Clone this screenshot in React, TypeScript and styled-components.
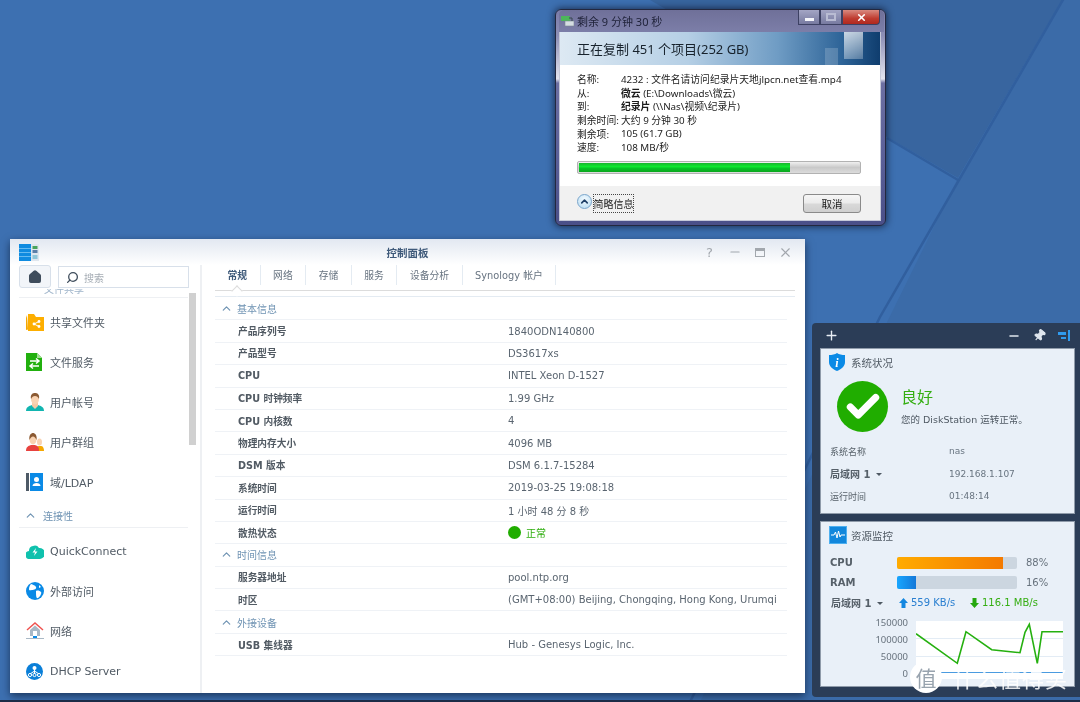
import React from 'react';
import styled, { createGlobalStyle } from 'styled-components';
import { ChevronUp, House, Search, Pin, Plus, Minus, X, Check } from 'lucide-react';

const GlobalStyle = createGlobalStyle`
  html, body {
    margin: 0;
    padding: 0;
    height: 100%;
    overflow: hidden;
  }
  * {
    box-sizing: border-box;
  }
  #root {
    font-family: "DejaVu Sans", "Noto Sans CJK SC", sans-serif;
  }
`;

const copyRows = [
  { label: '名称:', value: '4232 : 文件名请访问纪录片天地jlpcn.net查看.mp4' },
  { label: '从:', strong: '微云', value: ' (E:\\Downloads\\微云)' },
  { label: '到:', strong: '纪录片', value: ' (\\\\Nas\\视频\\纪录片)' },
  { label: '剩余时间:', value: '大约 9 分钟 30 秒' },
  { label: '剩余项:', value: '105 (61.7 GB)' },
  { label: '速度:', value: '108 MB/秒' },
];

const sections = [
  {
    title: '基本信息',
    rows: [
      ['产品序列号', '1840ODN140800'],
      ['产品型号', 'DS3617xs'],
      ['CPU', 'INTEL Xeon D-1527'],
      ['CPU 时钟频率', '1.99 GHz'],
      ['CPU 内核数', '4'],
      ['物理内存大小', '4096 MB'],
      ['DSM 版本', 'DSM 6.1.7-15284'],
      ['系统时间', '2019-03-25 19:08:18'],
      ['运行时间', '1 小时 48 分 8 秒'],
      ['散热状态', ''],
    ],
  },
  {
    title: '时间信息',
    rows: [
      ['服务器地址', 'pool.ntp.org'],
      ['时区', '(GMT+08:00) Beijing, Chongqing, Hong Kong, Urumqi'],
    ],
  },
  {
    title: '外接设备',
    rows: [['USB 集线器', 'Hub - Genesys Logic, Inc.']],
  },
];

const tabs = ['常规', '网络', '存储', '服务', '设备分析', 'Synology 帐户'];

const chartPoints =
  '0,12.7 41.3,42.3 50,10.7 75.7,28.7 104,31.7 109,11.3 113.3,3.3 121.3,42.3 126,10.7 147,10.7';

// wallpaper facets, in page pixels
const WallpaperArt = () => (
  <WallpaperSvg width="1080" height="702" viewBox="0 0 1080 702">
    <rect width="1080" height="702" fill="#3d70b1" />
    <path d="M650 0H1062L958 178Z" fill="#38659f" />
    <path d="M1062 0H1080V702H700L958 178Z" fill="#3b6ba8" />
    <path d="M1064 -2 880 317 690 702" stroke="#315f9e" strokeWidth="2.5" fill="none" />
    <path d="M887 138 958 180" stroke="#315f9e" strokeWidth="2.5" fill="none" />
  </WallpaperSvg>
);

const LogoIcon = () => (
  <svg width="20" height="17" viewBox="0 0 20 17">
    <rect width="12" height="17" fill="#0f8be0" />
    <path d="M0 4.500h12M0 8.500h12M0 12.500h12" stroke="#7cc8f5" strokeWidth="0.8" />
    <rect x="12" width="8" height="17" fill="#dfe6ee" />
    <rect x="13.500" y="2" width="5" height="3" fill="#49a35c" />
    <rect x="13.500" y="6" width="5" height="3" fill="#5b7fa8" />
    <rect x="13.500" y="11" width="5" height="4" fill="#8fc5d8" />
  </svg>
);

const FolderIcon = () => (
  <svg width="18" height="17" viewBox="0 0 18 17">
    <path d="M0 4 1 1 2 15.500 0 16Z" fill="#f5a800" />
    <path d="M2 0h6l2 3h8v14H2Z" fill="#fdae00" />
    <circle cx="8" cy="10" r="1.400" fill="#fff" />
    <circle cx="13" cy="7.500" r="1.400" fill="#fff" />
    <circle cx="13" cy="12.500" r="1.400" fill="#fff" />
    <path d="M8 10 13 7.500M8 10l5 2.500" stroke="#fff" />
  </svg>
);

const FileServiceIcon = () => (
  <svg width="17" height="18" viewBox="0 0 17 18">
    <path d="M0 0h11l5 5v13H0Z" fill="#21b00e" />
    <path d="M11 0l5 5h-5Z" fill="#9ee08f" />
    <path d="M4 8h9M10 5.500 13 8l-3 2.500M13 13H4M7 10.500 4 13l3 2.500" stroke="#fff" strokeWidth="1.500" fill="none" />
  </svg>
);

const UserIcon = () => (
  <svg width="18" height="18" viewBox="0 0 18 18">
    <path d="M0 18c0-4 3-5 6-6h6c3 1 6 2 6 6Z" fill="#12b5b0" />
    <path d="M6 10h6v3l-3 3-3-3Z" fill="#f7c9a4" />
    <ellipse cx="9" cy="6" rx="4" ry="5.500" fill="#f9d3b2" />
    <path d="M5 6C4 1 7 0 9 0s5 1 4 6c-1-2-2-3-4-3S6 4 5 6Z" fill="#8b5a33" />
  </svg>
);

const GroupIcon = () => (
  <svg width="18" height="18" viewBox="0 0 18 18">
    <path d="M10 18c0-3 1-5 3-5h2c2 0 3 2 3 5Z" fill="#f5a800" />
    <ellipse cx="13.500" cy="9" rx="2.500" ry="3.500" fill="#f9d3b2" />
    <path d="M0 18c0-4 2-5 5-6h4c3 1 4 2 4 6Z" fill="#e8423f" />
    <ellipse cx="7" cy="6.500" rx="3.500" ry="5" fill="#f9d3b2" />
    <path d="M3.500 7C2.500 1 6 0 7 0s4.500 1 3.500 7C9.500 5 8.500 3.500 7 3.500S4.500 5 3.500 7Z" fill="#8b5a33" />
  </svg>
);

const LdapIcon = () => (
  <svg width="17" height="18" viewBox="0 0 17 18">
    <rect width="3" height="18" fill="#4e5a66" />
    <rect x="4" width="13" height="18" fill="#0a8ae6" />
    <circle cx="10.500" cy="6.500" r="2.500" fill="#fff" />
    <path d="M6.500 13c0-2 2-3 4-3s4 1 4 3Z" fill="#fff" />
  </svg>
);

const QuickConnectIcon = () => (
  <svg width="18" height="15" viewBox="0 0 18 15">
    <path d="M4 15a4 4 0 0 1-1-8 5 5 0 0 1 4-5 5 5 0 0 1 6 2 5.500 5.500 0 0 1 1 11Z" fill="#0fc1ad" />
    <path d="M10 4 6.500 8.500h2.500L8 12l3.500-4.500H9Z" fill="#fff" />
  </svg>
);

const GlobeIcon = () => (
  <svg width="18" height="18" viewBox="0 0 18 18">
    <circle cx="9" cy="9" r="9" fill="#0a8ae6" />
    <path d="M5 2c2 1 4 1 5 3S8 8 6 8 3 9 3 7 4 3 5 2ZM10 9c2-1 4 0 5 1s-1 5-3 6-2-3-2-7ZM13 3l2 2-2 1Z" fill="#fff" />
  </svg>
);

const NetworkIcon = () => (
  <svg width="18" height="18" viewBox="0 0 18 18">
    <path d="M1 8 9 1l8 7" stroke="#ef5350" strokeWidth="1.500" fill="none" />
    <path d="M4 8l5-4.500L14 8v6H4Z" fill="#a9b8c5" />
    <rect x="7" y="9" width="4" height="5" fill="#fff" />
    <rect x="7" y="14" width="4" height="3" fill="#0a8ae6" />
    <path d="M0 16.500h18" stroke="#a9b8c5" />
  </svg>
);

const DhcpIcon = () => (
  <svg width="17" height="17" viewBox="0 0 17 17">
    <circle cx="8.500" cy="8.500" r="8.500" fill="#0a7fd8" />
    <circle cx="8.500" cy="5" r="2" fill="#fff" />
    <path d="M8.500 6v5M8.500 8 4 11M8.500 8l4.500 3" stroke="#fff" />
    <circle cx="4" cy="12" r="1.600" fill="none" stroke="#fff" />
    <circle cx="8.500" cy="12" r="1.600" fill="none" stroke="#fff" />
    <circle cx="13" cy="12" r="1.600" fill="none" stroke="#fff" />
  </svg>
);

const CopyIcon = () => (
  <svg width="13" height="12" viewBox="0 0 13 12">
    <rect y="1" width="9" height="5" fill="#4cb65a" />
    <rect x="4" y="6" width="9" height="5" fill="#d5dde2" stroke="#7b8790" strokeWidth="0.600" />
    <path d="M8 3h3v3" stroke="#37474f" fill="none" />
  </svg>
);

const ShieldIcon = () => (
  <svg width="16" height="18" viewBox="0 0 16 18">
    <path d="M8 0c2 1.500 5 2 8 2v7c0 4-3 7-8 9-5-2-8-5-8-9V2c3 0 6-.5 8-2Z" fill="#0a8ae6" />
    <text x="8" y="13.500" textAnchor="middle" fontSize="12" fontWeight="700" fontStyle="italic" fontFamily="Liberation Serif, serif" fill="#fff">i</text>
  </svg>
);

const MonitorIcon = () => (
  <svg width="18" height="18" viewBox="0 0 18 18">
    <rect x="0.500" y="0.500" width="17" height="17" fill="#1287dc" stroke="#4eb0f0" />
    <path d="M2 9h3l1.500-3L8 12l1.500-7L11 11l1-2h4" stroke="#fff" strokeWidth="1" fill="none" />
  </svg>
);

const ArrowGlyph = ({ color, down }: { color: string; down?: boolean }) => (
  <svg width="9" height="10" viewBox="0 0 9 10" style={{ transform: down ? 'rotate(180deg)' : undefined }}>
    <path d="M4.500 0 9 5H6.500v5h-4V5H0Z" fill={color} />
  </svg>
);

export default function App() {
  return (
    <Desktop>
      <GlobalStyle />
      <WallpaperArt />

      <CopyDialog>
        <DialogTitleBar>
          <CopyIcon />
          <DialogCaption>剩余 9 分钟 30 秒</DialogCaption>
          <CaptionButtons>
            <CaptionButton><MinGlyph /></CaptionButton>
            <CaptionButton><MaxGlyph /></CaptionButton>
            <CloseButton>
              <X size={11} strokeWidth={3.5} color="#fff" />
            </CloseButton>
          </CaptionButtons>
        </DialogTitleBar>
        <DialogClient>
          <DialogBanner>
            <BannerTitle>正在复制 451 个项目(252 GB)</BannerTitle>
            <BannerGlassBig />
            <BannerGlassSmall />
          </DialogBanner>
          <DialogBody>
            <CopyGrid>
              {copyRows.map((row) => (
                <React.Fragment key={row.label}>
                  <span>{row.label}</span>
                  <span>
                    {row.strong && <strong>{row.strong}</strong>}
                    {row.value}
                  </span>
                </React.Fragment>
              ))}
            </CopyGrid>
            <ProgressTrack>
              <ProgressFill style={{ width: '75.4%' }} />
            </ProgressTrack>
          </DialogBody>
          <DialogFooter>
            <DetailsToggle>
              <ToggleCircle>
                <ChevronUp size={11} strokeWidth={3.5} color="#1f3f66" />
              </ToggleCircle>
              <ToggleLabel>简略信息</ToggleLabel>
            </DetailsToggle>
            <CancelButton>取消</CancelButton>
          </DialogFooter>
        </DialogClient>
      </CopyDialog>

      <ControlPanel>
        <PanelTitleBar>
          <LogoIcon />
          <PanelTitle>控制面板</PanelTitle>
          <PanelControls>
            <PanelHelp>?</PanelHelp>
            <Minus size={14} strokeWidth={2} />
            <PanelMaxGlyph />
            <X size={15} strokeWidth={1.8} />
          </PanelControls>
        </PanelTitleBar>
        <PanelBody>
          <Sidebar>
            <SidebarTools>
              <HomeButton>
                <House size={14} strokeWidth={2.6} color="#3f4d5c" fill="#3f4d5c" />
              </HomeButton>
              <SearchBox>
                <Search size={13} strokeWidth={2.4} color="#3f4d5c" style={{ transform: 'scaleX(-1)' }} />
                <span>搜索</span>
              </SearchBox>
            </SidebarTools>
            <ClippedGroup>
              <SideHeading>文件共享</SideHeading>
            </ClippedGroup>
            <NavItem><NavIcon><FolderIcon /></NavIcon>共享文件夹</NavItem>
            <NavItem><NavIcon><FileServiceIcon /></NavIcon>文件服务</NavItem>
            <NavItem><NavIcon><UserIcon /></NavIcon>用户帐号</NavItem>
            <NavItem><NavIcon><GroupIcon /></NavIcon>用户群组</NavItem>
            <NavItem><NavIcon><LdapIcon /></NavIcon>域/LDAP</NavItem>
            <NavGroup>
              <ChevronUp size={13} strokeWidth={2.2} />
              连接性
            </NavGroup>
            <NavItem><NavIcon><QuickConnectIcon /></NavIcon>QuickConnect</NavItem>
            <NavItem><NavIcon><GlobeIcon /></NavIcon>外部访问</NavItem>
            <NavItem><NavIcon><NetworkIcon /></NavIcon>网络</NavItem>
            <NavItem><NavIcon><DhcpIcon /></NavIcon>DHCP Server</NavItem>
            <SideScrollbar />
          </Sidebar>
          <Content>
            <TabBar>
              {tabs.map((tab, i) => (
                <Tab key={tab} $active={i === 0}>{tab}</Tab>
              ))}
            </TabBar>
            <InfoTable>
              {sections.map((section) => (
                <React.Fragment key={section.title}>
                  <SectionRow>
                    <ChevronUp size={13} strokeWidth={2.2} />
                    {section.title}
                  </SectionRow>
                  {section.rows.map(([label, value]) => (
                    <InfoRow key={label}>
                      <InfoLabel>{label}</InfoLabel>
                      {value ? (
                        <InfoValue>{value}</InfoValue>
                      ) : (
                        <StatusValue>
                          <StatusDot />
                          正常
                        </StatusValue>
                      )}
                    </InfoRow>
                  ))}
                </React.Fragment>
              ))}
            </InfoTable>
          </Content>
        </PanelBody>
      </ControlPanel>

      <WidgetPanel>
        <WidgetToolbar>
          <Plus size={15} strokeWidth={2.2} color="#e8eef5" />
          <WidgetTools>
            <Minus size={14} strokeWidth={2.2} color="#dfe6ee" />
            <Pin size={13} strokeWidth={2.2} color="#dfe6ee" fill="#dfe6ee" style={{ transform: 'rotate(40deg)' }} />
            <DockGlyph />
          </WidgetTools>
        </WidgetToolbar>

        <HealthCard>
          <CardTitle>
            <TitleIcon><ShieldIcon /></TitleIcon>
            系统状况
          </CardTitle>
          <HealthSummary>
            <HealthBadge>
              <Check size={38} strokeWidth={4.5} color="#fff" />
            </HealthBadge>
            <div>
              <HealthWord>良好</HealthWord>
              <HealthNote>您的 DiskStation 运转正常。</HealthNote>
            </div>
          </HealthSummary>
          <SystemGrid>
            <SystemKey>系统名称</SystemKey>
            <SystemValue>nas</SystemValue>
            <SystemKey $strong>局域网 1 <Caret /></SystemKey>
            <SystemValue>192.168.1.107</SystemValue>
            <SystemKey>运行时间</SystemKey>
            <SystemValue>01:48:14</SystemValue>
          </SystemGrid>
        </HealthCard>

        <MonitorCard>
          <CardTitle>
            <TitleIcon><MonitorIcon /></TitleIcon>
            资源监控
          </CardTitle>
          <MeterList>
            <MeterRow>
              <MeterName>CPU</MeterName>
              <MeterTrack>
                <MeterFill $kind="cpu" style={{ width: '88%' }} />
              </MeterTrack>
              <MeterValue>88%</MeterValue>
            </MeterRow>
            <MeterRow>
              <MeterName>RAM</MeterName>
              <MeterTrack>
                <MeterFill $kind="ram" style={{ width: '16%' }} />
              </MeterTrack>
              <MeterValue>16%</MeterValue>
            </MeterRow>
          </MeterList>
          <NetRow>
            <NetName>局域网 1 <Caret /></NetName>
            <NetUp>
              <ArrowGlyph color="#1487e0" />
              559 KB/s
            </NetUp>
            <NetDown>
              <ArrowGlyph color="#25a80f" down />
              116.1 MB/s
            </NetDown>
          </NetRow>
          <ChartRow>
            <ChartAxis>
              <span>150000</span>
              <span>100000</span>
              <span>50000</span>
              <span>0</span>
            </ChartAxis>
            <ChartPlot>
              <svg width="147" height="58" viewBox="0 0 147 58">
                <path d="M0 17.500h147M0 35.500h147" stroke="#e3ecf5" />
                <path d="M0 51.500h147" stroke="#4a9be0" strokeWidth="1.200" />
                <polyline points={chartPoints} fill="none" stroke="#25b00f" strokeWidth="1.600" />
              </svg>
            </ChartPlot>
          </ChartRow>
        </MonitorCard>
      </WidgetPanel>

      <Watermark>
        <WatermarkBadge>值</WatermarkBadge>
        什么值得买
      </Watermark>
    </Desktop>
  );
}

const Desktop = styled.div`
  position: relative;
  width: 1080px;
  height: 702px;
  overflow: hidden;
  filter: blur(0.4px);
  background: #3d70b1;
  border-bottom: 2px solid #1c2c47;
`;

const WallpaperSvg = styled.svg`
  position: absolute;
  left: 0;
  top: 0;
`;

const CopyDialog = styled.section`
  position: absolute;
  left: 555px;
  top: 9px;
  width: 331px;
  height: 217px;
  padding: 0 4px 4px 3px;
  display: flex;
  flex-direction: column;
  border: 1px solid #23283f;
  border-radius: 6px;
  background: linear-gradient(180deg, #7a7ba8 0%, #8d8fb6 12%, #e3e4ef 32%, #6c6fa2 34%, #5a5f98 70%, #4a4f88 100%);
  box-shadow: 0 0 7px 1px rgba(10, 15, 35, 0.65);
`;

const DialogTitleBar = styled.div`
  height: 22px;
  flex: none;
  margin: 0 -3px 0 0;
  padding-left: 2px;
  display: flex;
  align-items: center;
  gap: 3px;
  background: linear-gradient(180deg, #6f7099, #7c7ea8);
  border-radius: 5px 5px 0 0;
`;

const DialogCaption = styled.span`
  font-family: "Noto Sans", "Noto Sans CJK SC", sans-serif;
  font-size: 11px;
  color: #20233a;
`;

const CaptionButtons = styled.div`
  margin-left: auto;
  margin-right: 4px;
  align-self: flex-start;
  display: flex;
  height: 15px;
`;

const CaptionButton = styled.div`
  width: 22px;
  display: flex;
  align-items: center;
  justify-content: center;
  border: 1px solid #3d4163;
  border-top: 0;
  background: linear-gradient(180deg, #a3a5c4, #777aa0);
`;

const CloseButton = styled(CaptionButton)`
  width: 38px;
  border-radius: 0 0 4px 0;
  background: linear-gradient(180deg, #d98a80 0%, #bf3c30 60%, #b0281e 100%);
`;

const MinGlyph = styled.div`
  width: 9px;
  height: 3px;
  margin-top: 5px;
  background: #f4f5fa;
`;

const MaxGlyph = styled.div`
  width: 10px;
  height: 8px;
  border: 2px solid #b9bcd3;
`;

const DialogClient = styled.div`
  flex: 1;
  min-height: 0;
  display: flex;
  flex-direction: column;
  border: 1px solid #c5c8d8;
  border-top: 0;
  background: #fff;
  font-family: "Noto Sans", "Noto Sans CJK SC", sans-serif;
`;

const DialogBanner = styled.div`
  position: relative;
  height: 33px;
  flex: none;
  padding-left: 17px;
  display: flex;
  align-items: center;
  overflow: hidden;
  background: linear-gradient(90deg, #dde9f3 0%, #b5cfe5 40%, #6f9cc4 68%, #2e6498 88%, #0f3d6e 100%);
`;

const BannerTitle = styled.h1`
  margin: 0;
  font-size: 13px;
  font-weight: 400;
  color: #17222c;
`;

const BannerGlassBig = styled.div`
  position: absolute;
  right: 17px;
  top: 0;
  width: 19px;
  height: 27px;
  background: linear-gradient(160deg, rgba(255, 255, 255, 0.75), rgba(255, 255, 255, 0.25));
`;

const BannerGlassSmall = styled.div`
  position: absolute;
  right: 42px;
  bottom: 0;
  width: 13px;
  height: 17px;
  background: rgba(255, 255, 255, 0.18);
`;

const DialogBody = styled.div`
  height: 121px;
  flex: none;
  padding: 7px 19px 0 17px;
`;

const CopyGrid = styled.div`
  display: grid;
  grid-template-columns: 44px 1fr;
  grid-auto-rows: 13.7px;
  align-items: center;
  font-size: 9.8px;
  white-space: nowrap;
  color: #1c1c1c;

  strong {
    font-weight: 700;
  }
`;

const ProgressTrack = styled.div`
  height: 13px;
  margin-top: 7px;
  padding: 1px;
  border: 1px solid #b2b2b2;
  border-radius: 2px;
  background: linear-gradient(180deg, #f0f0f0, #c9c9c9 50%, #dcdcdc);
`;

const ProgressFill = styled.div`
  height: 100%;
  background: linear-gradient(180deg, #17b52c 0%, #0ee82f 40%, #05c425 60%, #0aa51e 100%);
`;

const DialogFooter = styled.div`
  flex: 1;
  padding: 8px 19px 0 17px;
  display: flex;
  justify-content: space-between;
  align-items: flex-start;
  background: #f1f1f1;
`;

const DetailsToggle = styled.div`
  display: flex;
`;

const ToggleCircle = styled.div`
  width: 15px;
  height: 15px;
  margin-right: 1px;
  display: flex;
  align-items: center;
  justify-content: center;
  border: 1px solid #7aa6cc;
  border-radius: 50%;
  background: radial-gradient(circle at 50% 35%, #f4fbff, #b5d9f0);
`;

const ToggleLabel = styled.div`
  width: 41px;
  height: 19px;
  display: flex;
  align-items: center;
  justify-content: center;
  border: 1px dotted #444;
  font-size: 10px;
  color: #1c1c1c;
  white-space: nowrap;
`;

const CancelButton = styled.button`
  width: 58px;
  height: 19px;
  padding: 0;
  border: 1px solid #8a8a8a;
  border-radius: 3px;
  background: linear-gradient(180deg, #f6f6f6, #ebebeb 48%, #d9d9d9 52%, #cfcfcf);
  font-family: inherit;
  font-size: 10.5px;
  color: #1c1c1c;
`;

const ControlPanel = styled.section`
  position: absolute;
  left: 10px;
  top: 239px;
  width: 795px;
  height: 454px;
  display: flex;
  flex-direction: column;
  background: #fff;
  box-shadow: 0 3px 8px rgba(5, 15, 35, 0.6);
`;

const PanelTitleBar = styled.header`
  height: 26px;
  flex: none;
  padding: 0 12px 0 9px;
  display: flex;
  align-items: center;
  background: linear-gradient(180deg, #e2e8f1, #ffffff);
`;

const PanelTitle = styled.div`
  position: absolute;
  left: 0;
  right: 0;
  top: 6px;
  text-align: center;
  font-size: 10.5px;
  font-weight: 700;
  color: #3f5a7a;
`;

const PanelControls = styled.div`
  margin-left: auto;
  display: flex;
  align-items: center;
  gap: 12px;
  color: #a2a7ad;
`;

const PanelHelp = styled.span`
  margin-right: 3px;
  font-size: 13px;
`;

const PanelMaxGlyph = styled.div`
  width: 10px;
  height: 9px;
  margin: 0 1px;
  border: 1px solid #a2a7ad;
  border-top-width: 3px;
`;

const PanelBody = styled.div`
  flex: 1;
  min-height: 0;
  display: flex;
`;

const Sidebar = styled.aside`
  position: relative;
  width: 192px;
  flex: none;
  padding: 0 12px 0 9px;
  border-right: 2px solid #eef0f3;
  overflow: hidden;
`;

const SidebarTools = styled.div`
  height: 24px;
  display: flex;
  gap: 7px;
`;

const HomeButton = styled.div`
  width: 32px;
  height: 23px;
  flex: none;
  display: flex;
  align-items: center;
  justify-content: center;
  border: 1px solid #d8e0ea;
  border-radius: 3px;
  background: #f2f5f9;
`;

const SearchBox = styled.div`
  width: 131px;
  height: 22px;
  flex: none;
  margin-top: 1px;
  padding-left: 7px;
  display: flex;
  align-items: center;
  gap: 5px;
  border: 1px solid #d8e0ea;
  font-size: 10px;
  color: #a6adb5;
`;

const ClippedGroup = styled.div`
  height: 9px;
  margin-bottom: 4px;
  overflow: hidden;
  border-bottom: 1px solid #eef0f3;
`;

const SideHeading = styled.div`
  margin-top: -8px;
  padding-left: 25px;
  font-size: 10px;
  color: #9db3c9;
`;

const NavItem = styled.div`
  height: 40px;
  padding-left: 7px;
  display: flex;
  align-items: center;
  font-size: 11px;
  color: #505a64;
  white-space: nowrap;
`;

const NavIcon = styled.span`
  width: 24px;
  display: flex;
  align-items: center;
`;

const NavGroup = styled.div`
  height: 24px;
  margin: 2px 0 3px;
  padding-left: 5px;
  display: flex;
  align-items: center;
  gap: 6px;
  border-bottom: 1px solid #eef0f3;
  font-size: 10px;
  color: #6f93b3;
`;

const SideScrollbar = styled.div`
  position: absolute;
  left: 179px;
  top: 28px;
  width: 7px;
  height: 152px;
  background: #d0d0d0;
`;

const Content = styled.div`
  flex: 1;
  min-width: 0;
  padding: 0 10px 0 13px;
`;

const TabBar = styled.div`
  height: 26px;
  display: flex;
  border-bottom: 1px solid #dcdcdc;
  box-shadow: 0 5px 0 #fff, 0 6px 0 #e4ebf2;
`;

const Tab = styled.div<{ $active?: boolean }>`
  position: relative;
  height: 20px;
  padding: 0 12.5px;
  display: flex;
  align-items: center;
  border-right: 1px solid #e4ebf2;
  font-size: 9.8px;
  font-weight: ${(p) => (p.$active ? 700 : 400)};
  color: ${(p) => (p.$active ? '#3f5a7a' : '#677380')};
  white-space: nowrap;

  &::after {
    content: '';
    display: ${(p) => (p.$active ? 'block' : 'none')};
    position: absolute;
    left: 50%;
    bottom: -10px;
    width: 7px;
    height: 7px;
    margin-left: -4px;
    background: #fff;
    border-left: 1px solid #dcdcdc;
    border-top: 1px solid #dcdcdc;
    transform: rotate(45deg);
  }
`;

const InfoTable = styled.div`
  margin: 7px 8px 0 0;
`;

const SectionRow = styled.div`
  height: 22.4px;
  padding-left: 5px;
  display: flex;
  align-items: center;
  gap: 4px;
  border-bottom: 1px solid #eff2f6;
  font-size: 10px;
  color: #6f93b3;
`;

const InfoRow = styled.div`
  height: 22.4px;
  padding-left: 23px;
  display: grid;
  grid-template-columns: 270px 1fr;
  align-items: center;
  border-bottom: 1px solid #eff2f6;
  white-space: nowrap;
`;

const InfoLabel = styled.span`
  font-weight: 700;
  color: #515a63;
  font-size: 9.7px;
`;

const InfoValue = styled.span`
  font-size: 10px;
  color: #5a6570;
`;

const StatusValue = styled.span`
  display: flex;
  align-items: center;
  gap: 5px;
  font-size: 10px;
  color: #2fae0f;
`;

const StatusDot = styled.span`
  width: 13px;
  height: 13px;
  border-radius: 50%;
  background: #20ad00;
`;

const WidgetPanel = styled.aside`
  position: absolute;
  left: 812px;
  top: 323px;
  width: 268px;
  height: 374px;
  padding: 0 5px 0 8px;
  border-radius: 4px 0 0 4px;
  background: #2b3d57;
`;

const WidgetToolbar = styled.div`
  height: 25px;
  padding: 0 5px 0 4px;
  display: flex;
  justify-content: space-between;
  align-items: center;
`;

const WidgetTools = styled.div`
  display: flex;
  align-items: center;
  gap: 12px;
`;

const DockGlyph = styled.div`
  width: 12px;
  height: 11px;
  border-right: 2px solid #2f9bf0;
  background: linear-gradient(#2f9bf0, #2f9bf0) 0 2px / 8px 3px no-repeat,
    linear-gradient(#2f9bf0, #2f9bf0) 3px 7px / 5px 2px no-repeat;
`;

const Card = styled.div`
  padding: 0 10px 0 8px;
  border: 1px solid #8f9baa;
  background: #e9f0f8;
`;

const HealthCard = styled(Card)`
  height: 166px;
  margin-bottom: 7px;
`;

const MonitorCard = styled(Card)`
  height: 166px;
`;

const CardTitle = styled.div`
  height: 26px;
  display: flex;
  align-items: center;
  font-size: 10.5px;
  color: #4f5963;
`;

const TitleIcon = styled.span`
  width: 22px;
  display: flex;
  align-items: center;
`;

const HealthSummary = styled.div`
  margin: 6px 0 0 8px;
  display: flex;
  align-items: center;
  gap: 13px;
`;

const HealthBadge = styled.div`
  width: 51px;
  height: 51px;
  display: flex;
  align-items: center;
  justify-content: center;
  border-radius: 50%;
  background: #20ad00;
`;

const HealthWord = styled.div`
  font-size: 16px;
  line-height: 22px;
  color: #35ae12;
`;

const HealthNote = styled.div`
  margin-top: 3px;
  font-size: 9.5px;
  color: #4f5963;
  white-space: nowrap;
`;

const SystemGrid = styled.div`
  margin: 8px 0 0 1px;
  display: grid;
  grid-template-columns: 119px 1fr;
  grid-auto-rows: 22.5px;
  align-items: center;
`;

const SystemKey = styled.span<{ $strong?: boolean }>`
  display: flex;
  align-items: center;
  gap: 3px;
  font-size: ${(p) => (p.$strong ? '10px' : '9px')};
  font-weight: ${(p) => (p.$strong ? 700 : 400)};
  color: #566069;
`;

const SystemValue = styled.span`
  font-size: 9px;
  color: #687480;
`;

const Caret = styled.span`
  width: 0;
  height: 0;
  margin-left: 3px;
  border: 3px solid transparent;
  border-top: 3px solid #4f5963;
  transform: translateY(2px);
`;

const MeterList = styled.div`
  margin: 5px 0 0 1px;
`;

const MeterRow = styled.div`
  height: 19.5px;
  display: flex;
  align-items: center;
`;

const MeterName = styled.span`
  width: 67px;
  font-size: 10px;
  font-weight: 700;
  color: #566069;
`;

const MeterTrack = styled.div`
  width: 120px;
  height: 12.5px;
  border-radius: 2px;
  background: #ccd6e0;
  overflow: hidden;
`;

const MeterFill = styled.div<{ $kind: 'cpu' | 'ram' }>`
  height: 100%;
  background: ${(p) =>
    p.$kind === 'cpu'
      ? 'linear-gradient(90deg, #ffab00, #f47a00)'
      : 'linear-gradient(90deg, #18a6ff, #1478d8)'};
`;

const MeterValue = styled.span`
  margin-left: 9px;
  font-size: 10px;
  color: #67727d;
`;

const NetRow = styled.div`
  height: 21px;
  display: flex;
  align-items: center;
  font-size: 10px;
  white-space: nowrap;
`;

const NetName = styled.span`
  width: 70px;
  padding-left: 2px;
  display: flex;
  align-items: center;
  gap: 3px;
  font-size: 10px;
  font-weight: 700;
  color: #566069;
`;

const NetUp = styled.span`
  width: 71px;
  display: flex;
  align-items: center;
  gap: 3px;
  color: #2a7fd0;
`;

const NetDown = styled(NetUp)`
  width: auto;
  color: #35ae12;
`;

const ChartRow = styled.div`
  margin-top: 8px;
  display: flex;
  gap: 8px;
`;

const ChartAxis = styled.div`
  width: 79px;
  height: 63px;
  margin-top: -4.5px;
  display: flex;
  flex-direction: column;
  justify-content: space-between;
  align-items: flex-end;
  font-family: "Noto Sans", sans-serif;
  font-size: 9.5px;
  line-height: 11px;
  color: #67727d;
`;

const ChartPlot = styled.div`
  width: 147px;
  height: 58px;
  background: #fff;

  svg {
    display: block;
  }
`;

const Watermark = styled.div`
  position: absolute;
  left: 910px;
  top: 661px;
  display: flex;
  align-items: center;
  gap: 11px;
  font-family: "Noto Sans CJK SC", sans-serif;
  font-size: 22px;
  line-height: 32px;
  letter-spacing: 1px;
  color: rgba(255, 255, 255, 0.85);
  white-space: nowrap;
`;

const WatermarkBadge = styled.div`
  width: 32px;
  height: 32px;
  display: flex;
  align-items: center;
  justify-content: center;
  border-radius: 50%;
  background: #fff;
  font-size: 21px;
  letter-spacing: 0;
  color: #98a3ae;
`;
